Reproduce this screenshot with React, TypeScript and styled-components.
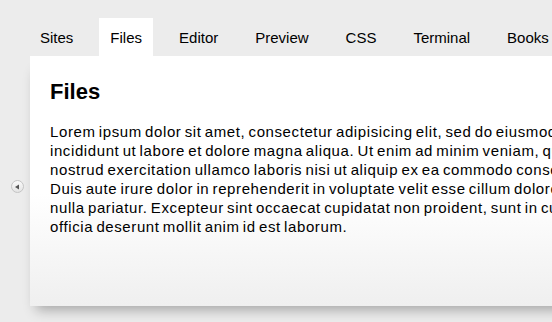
import React from 'react'
import styled, {createGlobalStyle} from 'styled-components'

const GlobalStyle = createGlobalStyle`
  html, body {
    margin: 0;
    padding: 0;
    overflow: hidden;
    background: #ececec;
    font-family: "Liberation Sans", Arial, sans-serif;
    color: #000;
  }
`

const tabs = ['Sites', 'Files', 'Editor', 'Preview', 'CSS', 'Terminal', 'Books']

const lines = [
  'Lorem ipsum dolor sit amet, consectetur adipisicing elit, sed do eiusmod tempor',
  'incididunt ut labore et dolore magna aliqua. Ut enim ad minim veniam, quis',
  'nostrud exercitation ullamco laboris nisi ut aliquip ex ea commodo consequat.',
  'Duis aute irure dolor in reprehenderit in voluptate velit esse cillum dolore eu fugiat',
  'nulla pariatur. Excepteur sint occaecat cupidatat non proident, sunt in culpa qui',
  'officia deserunt mollit anim id est laborum.',
]

export default function App() {
  return (
    <>
      <GlobalStyle />
      <Page>
        <TabBar>
          {tabs.map(t => (
            <Tab key={t} active={t === 'Files'}>
              {t}
            </Tab>
          ))}
        </TabBar>
        <Panel>
          <Heading>Files</Heading>
          <Text>
            {lines.map((l, i) => (
              <Line key={i}>{l}</Line>
            ))}
          </Text>
        </Panel>
        <Toggle aria-label="collapse">
          <svg width="6" height="6" viewBox="0 0 6 6">
            <path d="M1 3 L5 0.5 L5 5.5 Z" fill="#555" />
          </svg>
        </Toggle>
      </Page>
    </>
  )
}

const Page = styled.div`
  position: relative;
  width: 552px;
  height: 322px;
  padding-top: 18px;
  box-sizing: border-box;
  overflow: hidden;
`

const TabBar = styled.div`
  display: flex;
  gap: 15px;
  padding-left: 29px;
  height: 38px;
  white-space: nowrap;
`

const Tab = styled.div<{active?: boolean}>`
  display: flex;
  align-items: center;
  padding: 0 11px;
  font-size: 15px;
  background: ${p => (p.active ? '#fff' : 'transparent')};
`

const Panel = styled.div`
  margin-left: 30px;
  width: 780px;
  height: 250px;
  box-sizing: border-box;
  padding: 21px 20px 0;
  background: linear-gradient(to bottom, #fff 0%, #fff 55%, #efefef 100%);
  box-shadow: 0 10px 12px -6px rgba(0, 0, 0, 0.3);
`

const Heading = styled.h1`
  margin: 0 0 15px;
  font-size: 22px;
  font-weight: bold;
  line-height: 30px;
`

const Text = styled.div`
  font-size: 15px;
  line-height: 19px;
  letter-spacing: 0.6px;
  word-spacing: -1.5px;
  white-space: nowrap;
`

const Line = styled.div``

const Toggle = styled.button`
  position: absolute;
  left: 11px;
  top: 180px;
  width: 13px;
  height: 13px;
  padding: 0;
  border-radius: 50%;
  border: 1px solid #c4c4c4;
  background: linear-gradient(to bottom, #fafafa, #e4e4e4);
  display: flex;
  align-items: center;
  justify-content: center;
  cursor: pointer;

  svg {
    margin-left: -1px;
  }
`
